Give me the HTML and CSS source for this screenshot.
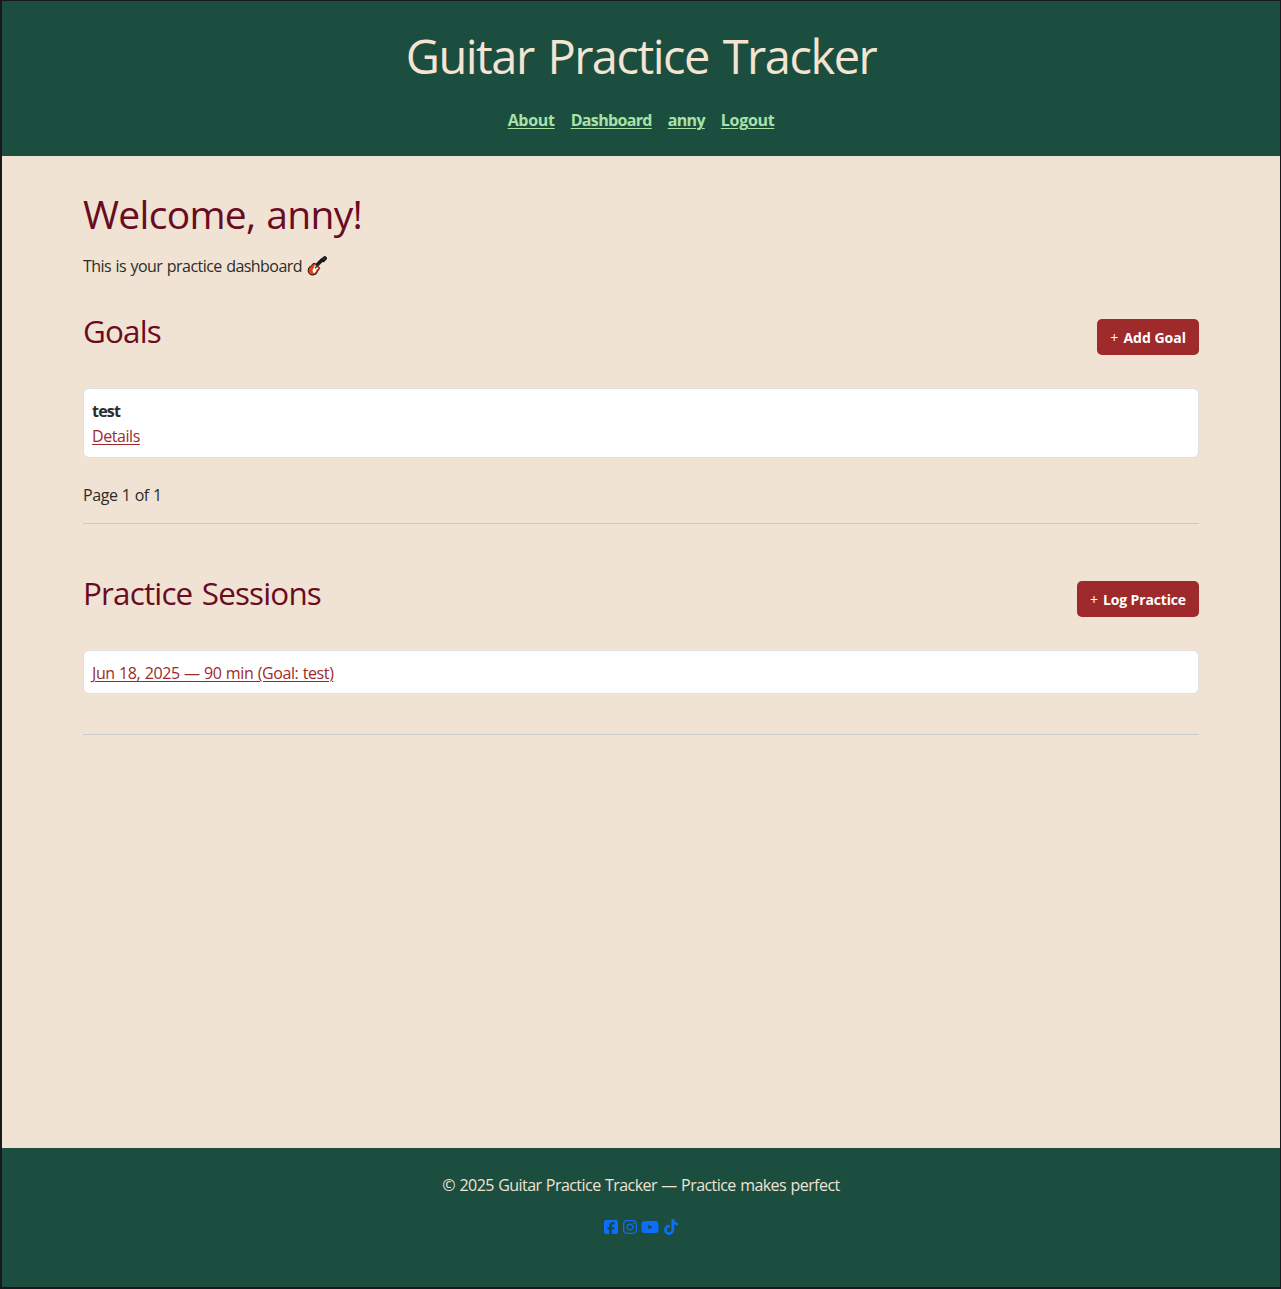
FILE: index.html
```html
<!DOCTYPE html>
<html lang="en">
<head>
<meta charset="utf-8">
<title>Guitar Practice Tracker</title>
<link rel="stylesheet" href="styles.css">
</head>
<body>
<header class="site-header">
  <h1 class="site-title">Guitar Practice Tracker</h1>
  <nav class="site-nav">
    <a href="#" class="about">About</a>
    <a href="#" class="dash">Dashboard</a>
    <a href="#" class="user">anny</a>
    <a href="#" class="logout">Logout</a>
  </nav>
</header>
<main class="container">
  <h1 class="welcome">Welcome, anny!</h1>
  <p class="intro"><span>This is your practice dashboard</span>
    <svg class="guitar" viewBox="0 0 20 20" aria-label="guitar">
      <path d="M9 10 15.500 3.500" stroke="#16191c" stroke-width="3.800"/>
      <path d="M14.500 3.200 17 .9Q18 .3 18.800 1.200L19.200 1.600Q19.800 2.300 19 3L16.700 5.500Z" fill="#30343a" stroke="#111" stroke-width="1.200"/>
      <path d="M5.200 8.300Q7.500 6.600 8.500 7.800L12.200 11.500Q13.200 12.500 12 13.600Q10.800 14 10.600 15.200Q9.700 18.900 5.800 19.100Q1.200 18.700 1.200 14.500Q1.200 10.800 4.200 9.900Q5 9.500 5.200 8.300Z" fill="#e8400f" stroke="#17110f" stroke-width="1"/>
      <path d="M7.800 9 11.400 12.200L9.400 13.800Q9 16.300 7.200 17.200Q5.400 16.600 5.600 13.800Q7 12 7.800 9Z" fill="#fff"/>
      <path d="M8 12.200 12.500 7.700" stroke="#333" stroke-width="1.400"/>
    </svg>
  </p>
  <section class="goals">
    <div class="section-head">
      <h2>Goals</h2>
      <a class="btn add" href="#">+ <b>Add Goal</b></a>
    </div>
    <ul class="card">
      <li><strong>test</strong></li>
      <li><a class="link" href="#">Details</a></li>
    </ul>
    <p class="pager">Page 1 of 1</p>
  </section>
  <hr>
  <section class="sessions">
    <div class="section-head">
      <h2>Practice Sessions</h2>
      <a class="btn log" href="#">+ <b>Log Practice</b></a>
    </div>
    <ul class="card">
      <li><a class="link session" href="#">Jun 18, 2025 — 90 min (Goal: test)</a></li>
    </ul>
  </section>
  <hr>
</main>
<footer class="site-footer">
  <p>© 2025 Guitar Practice Tracker — Practice makes perfect</p>
  <div class="social">
    <svg class="w14" viewBox="0 0 448 512"><path d="M64 32C28.700 32 0 60.700 0 96V416c0 35.300 28.700 64 64 64h98.200V334.200H109.400V256h52.800V222.300c0-87.100 39.400-127.500 125-127.500c16.200 0 44.200 3.200 55.700 6.400V172c-6-.6-16.500-1-29.600-1c-42 0-58.200 15.900-58.200 57.200V256h83.600l-14.400 78.200H255V480H384c35.300 0 64-28.700 64-64V96c0-35.300-28.700-64-64-64H64z"/></svg>
    <svg class="w14" viewBox="0 0 448 512"><path d="M224.100 141c-63.600 0-114.900 51.300-114.900 114.900s51.300 114.900 114.900 114.900S339 319.500 339 255.900 287.700 141 224.100 141zm0 189.600c-41.100 0-74.700-33.500-74.700-74.700s33.500-74.700 74.700-74.700 74.700 33.500 74.700 74.700-33.600 74.700-74.700 74.700zm146.400-194.300c0 14.900-12 26.800-26.800 26.800-14.900 0-26.800-12-26.800-26.800s12-26.800 26.800-26.800 26.800 12 26.800 26.800zm76.100 27.200c-1.700-35.900-9.900-67.700-36.200-93.900-26.200-26.200-58-34.400-93.900-36.200-37-2.100-147.900-2.100-184.900 0-35.800 1.700-67.600 9.900-93.900 36.100s-34.400 58-36.200 93.900c-2.100 37-2.100 147.900 0 184.900 1.700 35.900 9.900 67.700 36.200 93.900s58 34.400 93.900 36.200c37 2.100 147.900 2.100 184.900 0 35.900-1.700 67.700-9.900 93.900-36.200 26.200-26.200 34.400-58 36.200-93.900 2.100-37 2.100-147.800 0-184.800zM398.800 388c-7.800 19.600-22.900 34.700-42.600 42.600-29.500 11.700-99.500 9-132.100 9s-102.700 2.600-132.100-9c-19.600-7.800-34.700-22.900-42.600-42.600-11.700-29.500-9-99.500-9-132.100s-2.600-102.700 9-132.100c7.800-19.600 22.900-34.700 42.600-42.600 29.500-11.700 99.500-9 132.100-9s102.700-2.600 132.100 9c19.600 7.800 34.700 22.900 42.600 42.600 11.700 29.500 9 99.500 9 132.100s2.700 102.700-9 132.100z"/></svg>
    <svg class="w18" viewBox="0 0 576 512"><path d="M549.655 124.083c-6.281-23.650-24.787-42.276-48.284-48.597C458.781 64 288 64 288 64S117.220 64 74.629 75.486c-23.497 6.322-42.003 24.947-48.284 48.597-11.412 42.867-11.412 132.305-11.412 132.305s0 89.438 11.412 132.305c6.281 23.650 24.787 41.500 48.284 47.821C117.220 448 288 448 288 448s170.780 0 213.371-11.486c23.497-6.321 42.003-24.171 48.284-47.821 11.412-42.867 11.412-132.305 11.412-132.305s0-89.438-11.412-132.305zm-317.510 213.508V175.185l142.739 81.205-142.739 81.201z"/></svg>
    <svg class="w14" viewBox="0 0 448 512"><path d="M448 209.900a210.100 210.100 0 0 1-122.800-39.300V349.400A162.600 162.600 0 1 1 185 188.300V278.200a74.600 74.600 0 1 0 52.200 71.200V0l88 0a121.200 121.200 0 0 0 1.900 22.200h0A122.200 122.200 0 0 0 381 102.400a121.400 121.400 0 0 0 67 20.100z"/></svg>
  </div>
</footer>
</body>
</html>
```

FILE: styles.css
```css
* { box-sizing: border-box; }
body {
  margin: 0;
  min-height: 1289px;
  display: flex;
  flex-direction: column;
  border: solid #17191f;
  border-width: 1px 1px 2px 2px;
  background: #f0e3d3;
  color: #2b2b2b;
  font: 16px/24px "Open Sans", "Noto Sans", sans-serif;
}
h1, h2, p, ul { margin: 0; padding: 0; font-weight: 400; list-style: none; }
.site-header {
  height: 155px;
  padding-top: 26px;
  background: #1c4e3f;
  text-align: center;
}
.site-title { color: #f3e4d3; font-size: 47px; line-height: 58px; letter-spacing: -1.5px; word-spacing: 3px; }
.site-nav { display: flex; justify-content: center; gap: 16px; margin-top: 23px; }
.site-nav a {
  color: #a6e3a9;
  font-weight: 700;
  letter-spacing: -0.3px;
  text-underline-offset: 2px;
  text-decoration-thickness: 1px;
}
.site-nav .dash { letter-spacing: -0.66px; }
.site-nav .user { letter-spacing: -0.7px; }
.container { width: 1116px; margin: 0 auto; padding-top: 34px; flex: 1; }
.welcome { color: #6a0b23; font-size: 39px; line-height: 48px; letter-spacing: -0.7px; word-spacing: 1.5px; }
.intro { margin-top: 16px; display: flex; gap: 5px; letter-spacing: -0.55px; word-spacing: 0.85px; }
.guitar { width: 20px; height: 20px; margin-top: 2px; fill: none; }
.section-head { display: flex; justify-content: space-between; align-items: flex-start; height: 76px; }
.goals { margin-top: 34px; }
h2 { color: #6a0b23; font-size: 31.4px; line-height: 38px; letter-spacing: -0.82px; word-spacing: 2px; }
.btn {
  margin-top: 7px;
  height: 36px;
  padding: 0 13px;
  border-radius: 5px;
  background: #9e2a2b;
  color: #fff;
  font-size: 14px;
  line-height: 38px;
  text-decoration: none;
}
.btn b { margin-left: 1.5px; }
.log b { letter-spacing: -0.15px; }
.card {
  padding: 10px 8px 0;
  border: 1px solid #dedfe2;
  border-radius: 6px;
  background: #fff;
}
.card li + li { margin-top: 1px; }
.goals .card { height: 70px; }
.sessions .card { height: 44px; }
strong { letter-spacing: -0.8px; }
.link { color: #9e2a2b; letter-spacing: -0.43px; text-underline-offset: 2px; text-decoration-thickness: 1px; }
.session { letter-spacing: -0.4px; word-spacing: 0.6px; }
.pager { margin-top: 25px; letter-spacing: -0.4px; word-spacing: 0.4px; }
hr { margin: 16px 0 0; border: 0; height: 1px; background: #cbc9c9; }
.sessions { margin-top: 50px; }
.sessions + hr { margin-top: 40px; }
.site-footer { height: 139px; padding-top: 25px; background: #1c4e3f; color: #f0e3d3; text-align: center; letter-spacing: -0.55px; word-spacing: 0.75px; }
.social { display: flex; justify-content: center; gap: 4.5px; margin-top: 22px; }
.social svg { height: 16px; fill: #0d6efd; }
.w14 { width: 14px; }
.w18 { width: 18px; }
```
